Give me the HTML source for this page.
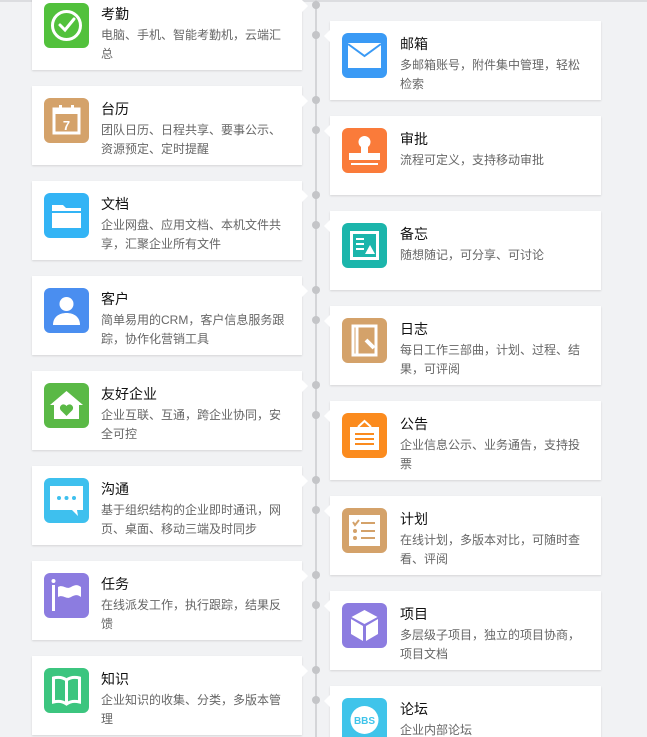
<!DOCTYPE html>
<html style="width:647px;height:737px;overflow:hidden"><head><meta charset="utf-8"><style>
*{margin:0;padding:0;box-sizing:border-box}
body{width:647px;height:737px;overflow:hidden;background:#f1f2f4;font-family:"Liberation Sans","Noto Sans CJK SC",sans-serif}
#w{position:relative;width:647px;height:737px;overflow:hidden}
.top{position:absolute;left:0;top:0;width:647px;height:2px;background:#dcdde0}
.line{position:absolute;left:315px;top:0;width:2px;height:737px;background:#d4d5d8}
.dot{position:absolute;left:312px;width:8px;height:8px;border-radius:50%;background:#c4c5c8}
.card{position:absolute;width:270px;height:79px;background:#fff;box-shadow:0 1px 2px rgba(0,0,0,.12)}
.card.l{left:32px}.card.r{left:330px;width:271px}
.card.l:after{content:"";position:absolute;right:-6px;top:9px;border:6px solid transparent;border-left-color:#fff;border-right:0}
.card.r:after{content:"";position:absolute;left:-6px;top:9px;border:6px solid transparent;border-right-color:#fff;border-left:0}
.ic{position:absolute;left:12px;top:12px;width:45px;height:45px;border-radius:6px}
.ic svg{width:45px;height:45px;display:block}
.t{position:absolute;left:69px;top:14px;font-size:14px;color:#111;line-height:18px}
.d{position:absolute;left:69px;top:35px;width:186px;font-size:12px;color:#666;line-height:19px}
.card.r .t,.card.r .d{left:70px}
</style></head><body><div id="w">
<div class="top"></div>
<div class="line"></div>
<div class="dot" style="top:1px"></div><div class="dot" style="top:31px"></div>
<div class="dot" style="top:96px"></div><div class="dot" style="top:126px"></div>
<div class="dot" style="top:191px"></div><div class="dot" style="top:221px"></div>
<div class="dot" style="top:286px"></div><div class="dot" style="top:316px"></div>
<div class="dot" style="top:381px"></div><div class="dot" style="top:411px"></div>
<div class="dot" style="top:476px"></div><div class="dot" style="top:506px"></div>
<div class="dot" style="top:571px"></div><div class="dot" style="top:601px"></div>
<div class="dot" style="top:666px"></div><div class="dot" style="top:696px"></div>

<div class="card l" style="top:-9px"><div class="ic" style="background:#52c13c"><svg viewBox="0 0 45 45" fill="none" stroke="#fff" stroke-width="3"><circle cx="22.5" cy="22.5" r="14"/><path d="M16 22l5 5 9-11" stroke-linecap="round"/></svg></div><div class="t">考勤</div><div class="d">电脑、手机、智能考勤机，云端汇总</div></div>
<div class="card l" style="top:86px"><div class="ic" style="background:#d4a26a"><svg viewBox="0 0 45 45"><rect x="10" y="11" width="25" height="24" fill="none" stroke="#fff" stroke-width="3"/><rect x="10" y="11" width="25" height="5" fill="#fff"/><rect x="15" y="7" width="3" height="7" fill="#fff"/><rect x="27" y="7" width="3" height="7" fill="#fff"/><text x="22.5" y="32" font-size="13" font-weight="bold" fill="#fff" text-anchor="middle" font-family="Liberation Sans">7</text></svg></div><div class="t">台历</div><div class="d">团队日历、日程共享、要事公示、资源预定、定时提醒</div></div>
<div class="card l" style="top:181px"><div class="ic" style="background:#33b4f5"><svg viewBox="0 0 45 45"><path d="M8 12h11l3 3h15v20H8z" fill="#fff"/><rect x="8" y="18" width="29" height="2" fill="#33b4f5"/></svg></div><div class="t">文档</div><div class="d">企业网盘、应用文档、本机文件共享，汇聚企业所有文件</div></div>
<div class="card l" style="top:276px"><div class="ic" style="background:#4a8ef0"><svg viewBox="0 0 45 45" fill="#fff"><circle cx="22.5" cy="16" r="7"/><path d="M9 37c0-8 6-12 13.5-12S36 29 36 37z"/></svg></div><div class="t">客户</div><div class="d">简单易用的CRM，客户信息服务跟踪，协作化营销工具</div></div>
<div class="card l" style="top:371px"><div class="ic" style="background:#5ab946"><svg viewBox="0 0 45 45"><path d="M6 22L22.5 8 39 22h-4v14H10V22z" fill="#fff"/><path d="M22.5 33l-6-6a3.5 3.5 0 016-4 3.5 3.5 0 016 4z" fill="#5ab946"/></svg></div><div class="t">友好企业</div><div class="d">企业互联、互通，跨企业协同，安全可控</div></div>
<div class="card l" style="top:466px"><div class="ic" style="background:#3ec0ee"><svg viewBox="0 0 45 45"><path d="M6 8h33v24h-6l1 6-6-6H6z" fill="#fff"/><circle cx="15" cy="20" r="2" fill="#3ec0ee"/><circle cx="22.5" cy="20" r="2" fill="#3ec0ee"/><circle cx="30" cy="20" r="2" fill="#3ec0ee"/></svg></div><div class="t">沟通</div><div class="d">基于组织结构的企业即时通讯，网页、桌面、移动三端及时同步</div></div>
<div class="card l" style="top:561px"><div class="ic" style="background:#8c7ce0"><svg viewBox="0 0 45 45" fill="#fff"><rect x="8" y="12" width="3" height="26"/><circle cx="9.5" cy="8" r="2"/><path d="M14 14c5-3 8 3 13 0s7-2 10 0v10c-3-2-5-3-10 0s-8-3-13 0z"/></svg></div><div class="t">任务</div><div class="d">在线派发工作，执行跟踪，结果反馈</div></div>
<div class="card l" style="top:656px"><div class="ic" style="background:#3cc57f"><svg viewBox="0 0 45 45" fill="none" stroke="#fff" stroke-width="3"><path d="M22.5 12c-4-3-9-3-13-2v24c4-1 9-1 13 2 4-3 9-3 13-2V10c-4-1-9-1-13 2zM22.5 12v24"/></svg></div><div class="t">知识</div><div class="d">企业知识的收集、分类，多版本管理</div></div>

<div class="card r" style="top:21px"><div class="ic" style="background:#3a9af5"><svg viewBox="0 0 45 45"><rect x="6" y="10" width="33" height="25" fill="#fff"/><path d="M6 11l16.5 12L39 11" fill="none" stroke="#3a9af5" stroke-width="2"/></svg></div><div class="t">邮箱</div><div class="d">多邮箱账号，附件集中管理，轻松检索</div></div>
<div class="card r" style="top:116px"><div class="ic" style="background:#fa7b3a"><svg viewBox="0 0 45 45" fill="#fff"><circle cx="22.5" cy="14" r="6"/><rect x="19" y="18" width="7" height="8"/><rect x="7" y="25" width="31" height="7"/><rect x="9" y="35" width="27" height="2"/></svg></div><div class="t">审批</div><div class="d">流程可定义，支持移动审批</div></div>
<div class="card r" style="top:211px"><div class="ic" style="background:#1bb5ab"><svg viewBox="0 0 45 45"><rect x="8" y="8" width="29" height="29" fill="#fff"/><rect x="11" y="11" width="23" height="23" fill="#1bb5ab"/><rect x="14" y="15" width="8" height="2" fill="#fff"/><rect x="14" y="20" width="8" height="2" fill="#fff"/><rect x="14" y="25" width="8" height="2" fill="#fff"/><path d="M23 31l5-9 5 9z" fill="#fff"/></svg></div><div class="t">备忘</div><div class="d">随想随记，可分享、可讨论</div></div>
<div class="card r" style="top:306px"><div class="ic" style="background:#d4a26a"><svg viewBox="0 0 45 45" fill="none" stroke="#fff" stroke-width="3"><path d="M11 8h23v29H11zM15 8v29"/><path d="M24 22l8 8" stroke-width="4"/></svg></div><div class="t">日志</div><div class="d">每日工作三部曲，计划、过程、结果，可评阅</div></div>
<div class="card r" style="top:401px"><div class="ic" style="background:#fb8b1e"><svg viewBox="0 0 45 45" fill="#fff"><path d="M8 14h29v23H8z"/><path d="M16 14l6.5-6 6.5 6" fill="none" stroke="#fff" stroke-width="2"/><rect x="13" y="20" width="19" height="2" fill="#fb8b1e"/><rect x="13" y="25" width="19" height="2" fill="#fb8b1e"/><rect x="13" y="30" width="19" height="2" fill="#fb8b1e"/></svg></div><div class="t">公告</div><div class="d">企业信息公示、业务通告，支持投票</div></div>
<div class="card r" style="top:496px"><div class="ic" style="background:#d4a26a"><svg viewBox="0 0 45 45"><rect x="7" y="7" width="31" height="31" fill="#fff"/><path d="M11 14l2 3 4-5" stroke="#d4a26a" stroke-width="2" fill="none"/><circle cx="13" cy="23" r="2" fill="#d4a26a"/><circle cx="13" cy="30" r="2" fill="#d4a26a"/><rect x="19" y="14" width="14" height="2" fill="#d4a26a"/><rect x="19" y="22" width="14" height="2" fill="#d4a26a"/><rect x="19" y="29" width="14" height="2" fill="#d4a26a"/></svg></div><div class="t">计划</div><div class="d">在线计划，多版本对比，可随时查看、评阅</div></div>
<div class="card r" style="top:591px"><div class="ic" style="background:#8c7ce0"><svg viewBox="0 0 45 45" fill="#fff"><path d="M22.5 7l13 7-13 7-13-7z"/><path d="M9 16l12 7v15l-12-7z"/><path d="M36 16l-12 7v15l12-7z"/></svg></div><div class="t">项目</div><div class="d">多层级子项目，独立的项目协商，项目文档</div></div>
<div class="card r" style="top:686px"><div class="ic" style="background:#3fc4ea"><svg viewBox="0 0 45 45"><circle cx="22.5" cy="22" r="14" fill="#fff"/><text x="22.5" y="26" font-size="10" font-weight="bold" fill="#3fc4ea" text-anchor="middle" font-family="Liberation Sans">BBS</text></svg></div><div class="t">论坛</div><div class="d">企业内部论坛</div></div>
</div></body></html>
